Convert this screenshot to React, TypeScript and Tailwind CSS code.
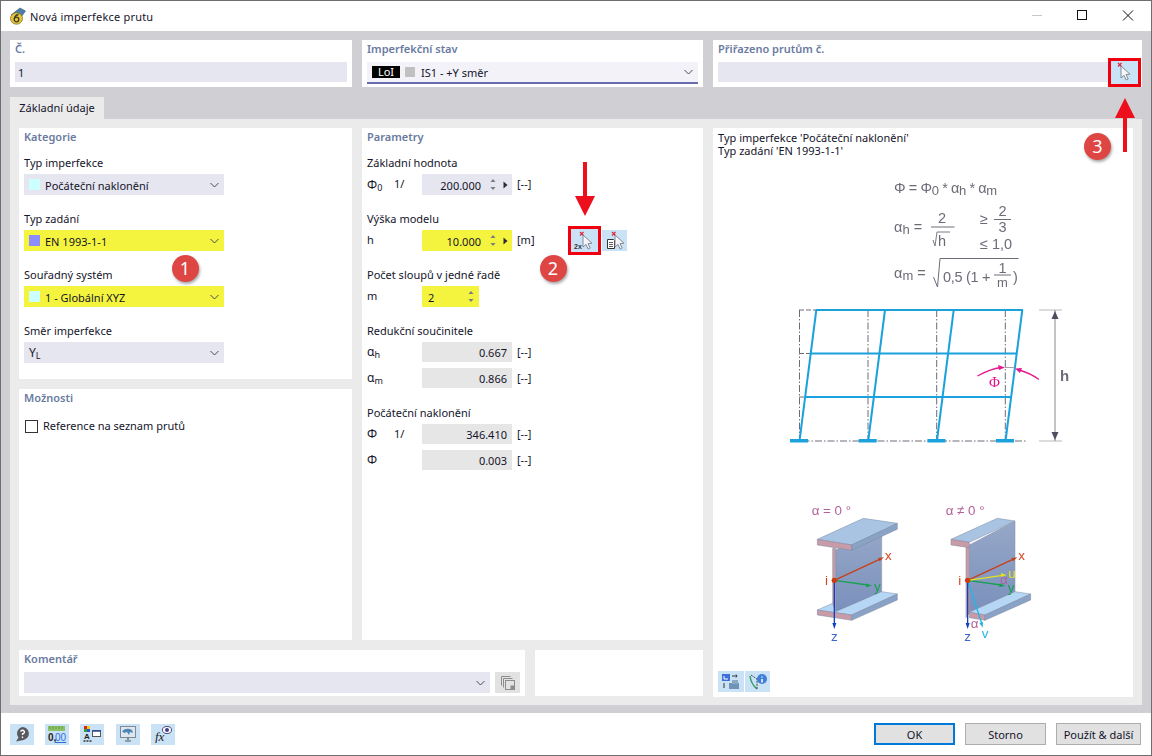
import React from "react";

const Chevron = () => (
  <svg width="9" height="6" viewBox="0 0 9 6" className="shrink-0">
    <path d="M.5 1l4 4 4-4" fill="none" stroke="#4a4a58" strokeWidth="1" />
  </svg>
);

const Combo = ({ color, text, yellow }: { color?: string; text: React.ReactNode; yellow?: boolean }) => (
  <div className={`flex items-center w-[200px] h-[21px] pl-[5px] pr-[5px] ${yellow ? "bg-[#f4f43e]" : "bg-[#e6e6f0]"}`}>
    {color && <span className="w-[11px] h-[11px] mr-[5px] shrink-0" style={{ background: color }} />}
    <span className="flex-1 leading-none pt-[1px]">{text}</span>
    <Chevron />
  </div>
);

const Group = ({ label, children }: { label: string; children: React.ReactNode }) => (
  <div className="mb-[13px]">
    <div className="h-[22px] flex items-center pt-[1px]">{label}</div>
    {children}
  </div>
);

const PanelTitle = ({ children }: { children: React.ReactNode }) => (
  <div className="h-[18px] flex items-center font-semibold text-[#6a7aa0]">{children}</div>
);

const Spin = () => (
  <svg width="8" height="15" viewBox="0 0 8 15" className="shrink-0">
    <path d="M4 2l2.5 3h-5z" fill="#7a7a80" />
    <path d="M1.5 10h5L4 13z" fill="#7a7a80" />
  </svg>
);
const RightTri = () => (
  <svg width="5" height="8" viewBox="0 0 5 8" className="shrink-0">
    <path d="M0.5 0.5L4.5 4 0.5 7.5z" fill="#2a2a35" />
  </svg>
);

const Sym = ({ a, b }: { a: string; b?: string }) => (
  <span className="whitespace-nowrap text-[12px]">
    {a}
    {b && <span className="text-[9px] relative top-[2px]">{b}</span>}
  </span>
);

const SpinInput = ({ value, yellow }: { value: string; yellow?: boolean }) => (
  <div className={`w-[90px] h-[21px] flex items-center ${yellow ? "bg-[#f4f43e]" : "bg-[#e6e6f0]"}`}>
    <span className="w-[59px] text-right leading-none pt-[1px]">{value}</span>
    <span className="ml-[8px]"><Spin /></span>
    <span className="ml-[6px]"><RightTri /></span>
  </div>
);

const ReadRow = ({ sym, mid, value }: { sym: React.ReactNode; mid?: string; value: string }) => (
  <div className="flex items-center h-[20px] mb-[6px]">
    <span className="w-[27px]">{sym}</span>
    <span className="w-[28px]">{mid}</span>
    <div className="w-[90px] h-[20px] bg-[#e6e6e6] text-right pr-[5px] leading-[21px]">{value}</div>
    <span className="ml-[5px]">[--]</span>
  </div>
);

const Cursor = ({ x = 0, y = 0 }: { x?: number; y?: number }) => (
  <g transform={`translate(${x} ${y})`}>
    <path d="M0 0l3.5 3.5M3.5 0L0 3.5" stroke="#e02030" strokeWidth="1.1" />
    <path d="M3 3l0 12 3-2.6 2.2 4.6 2-1-2.2-4.4 4-.4z" fill="#f4f6fa" stroke="#7c7f88" strokeWidth="0.9" />
  </g>
);

const IconBtn = ({ children, w = 24 }: { children: React.ReactNode; w?: number }) => (
  <div className="h-[21px] bg-[#cae2f6] flex items-center justify-center shrink-0" style={{ width: w }}>
    {children}
  </div>
);

const Formula = () => (
  <g fontFamily="'Liberation Sans', sans-serif" fontSize="14.5" fill="#6c6c78" className="blur-[0.3px]">
    <text x="894" y="193" letterSpacing="-0.4">Φ = Φ<tspan fontSize="13" dy="2">0</tspan><tspan dy="-2"> * α</tspan><tspan fontSize="13" dy="2">h</tspan><tspan dy="-2"> * α</tspan><tspan fontSize="13" dy="2">m</tspan></text>
    <text x="894" y="232">α<tspan fontSize="13" dy="2">h</tspan><tspan dy="-2"> =</tspan></text>
    <text x="942" y="223" textAnchor="middle">2</text>
    <path d="M931 227h23.5" stroke="#6c6c78" strokeWidth="1" />
    <path d="M933 240l2 6 2-14h13" fill="none" stroke="#6c6c78" strokeWidth="0.9" />
    <text x="938" y="245.5">h</text>
    <text x="980" y="224">≥</text>
    <text x="1002.5" y="216" textAnchor="middle">2</text>
    <path d="M994 219.500h17" stroke="#6c6c78" strokeWidth="1" />
    <text x="1002.5" y="232" textAnchor="middle">3</text>
    <text x="980" y="249">≤ 1,0</text>
    <text x="894" y="278">α<tspan fontSize="13" dy="2">m</tspan><tspan dy="-2"> =</tspan></text>
    <path d="M933.5 277l4 10 2.500-28.500h78.500" fill="none" stroke="#6c6c78" strokeWidth="1" />
    <text x="943" y="282" letterSpacing="-0.3">0,5 (1 +</text>
    <text x="1002.5" y="272.5" textAnchor="middle">1</text>
    <path d="M994 275h17" stroke="#6c6c78" strokeWidth="1" />
    <text x="1002.5" y="287" textAnchor="middle" fontSize="13">m</text>
    <text x="1013" y="282">)</text>
  </g>
);

const Frame = () => {
  const blue = "#1ba1dc";
  const dd = "7 2 1.5 2";
  return (
    <g className="blur-[0.2px]">
      {[799.5, 868, 936.7, 1005.3].map((x) => (
        <path key={x} d={`M${x} 310V440`} stroke="#6c6c78" strokeWidth="1" strokeDasharray={dd} />
      ))}
      <path d="M790 441H1027" stroke="#6c6c78" strokeWidth="1" strokeDasharray={dd} />
      <path d="M799 310h17M799 353.5h11M799 397h6" stroke="#6c6c78" strokeWidth="1" strokeDasharray="5 2" />
      <path d="M816 310H1023" stroke={blue} strokeWidth="2.2" />
      <path d="M810.7 353.5H1016.7M805 397H1011" stroke={blue} strokeWidth="1.9" />
      {[0, 68.7, 137.4, 206].map((d) => (
        <g key={d}>
          <path d={`M${799.5 + d} 441L${816.3 + d} 310`} stroke={blue} strokeWidth="2" />
          <rect x={790 + d} y="439" width="18" height="3.5" fill={blue} />
        </g>
      ))}
      <path d="M1039 310h23M1039 441h23" stroke="#b8b8be" strokeWidth="1" />
      <path d="M1055 310V441" stroke="#8a8a92" strokeWidth="1" />
      <path d="M1055 311l-3.500 8h7zM1055 440l-3.500-8h7z" fill="#4e4e60" />
      <text x="1060" y="381" fontFamily="'Liberation Sans', sans-serif" fontSize="15" fontWeight="bold" fill="#6c6c78">h</text>
      <path d="M1005 367.5h10" stroke="#8a8a92" strokeWidth="0.8" />
      <path d="M977.5 376Q990 369 1001 367.5M1039 379.5Q1030 373 1019 370" fill="none" stroke="#e5178f" strokeWidth="1.3" />
      <path d="M1005 367.5l-7-2.500 1 5zM1015 368.5l7-.5-2 5z" fill="#e5178f" />
      <text x="994.500" y="387" textAnchor="middle" fontFamily="'Liberation Serif', serif" fontSize="15" fill="#e5178f">Φ</text>
    </g>
  );
};

const axisFont = { fontFamily: "'Liberation Sans', sans-serif", fontSize: 40 };

const Beams = () => (
  <g transform="translate(780 495) scale(0.3333)" className="blur-[0.2px]">
    <defs>
      <linearGradient id="web" x1="0" y1="0" x2="0" y2="1">
        <stop offset="0" stopColor="#96a8c8" />
        <stop offset="1" stopColor="#7a90bc" />
      </linearGradient>
    </defs>
    <text x="95" y="61" {...axisFont} fill="#b4609a">α = 0 °</text>
    <text x="497" y="61" {...axisFont} fill="#b4609a">α ≠ 0 °</text>
    {/* left */}
    <g stroke="#7c8aa0" strokeWidth="1.5">
      <path d="M167 165L305 105V290L167 350z" fill="url(#web)" />
      <path d="M158 160h9V350l-9-6z" fill="#c99aa8" />
      <path d="M112 133L250 70l102 15L215 150z" fill="#a8c4e2" />
      <path d="M112 133l103 17v16L112 150z" fill="#c99aa8" />
      <path d="M215 150L352 85v18L215 166z" fill="#8aa2c6" />
      <path d="M112 345l46-20 9 25 138-60 47 7L215 360z" fill="#b6d6f6" />
      <path d="M112 345l103 15v16l-103-16z" fill="#c99aa8" />
      <path d="M215 360l137-63v18L215 376z" fill="#8aa2c6" />
    </g>
    <path d="M163 256L305 190" stroke="#c8401a" strokeWidth="4" />
    <path d="M312 187l-18 2 5 10z" fill="#c8401a" />
    <path d="M163 256l100 14" stroke="#18a050" strokeWidth="4" />
    <path d="M276 272l-17-7-1 12z" fill="#18a050" />
    <path d="M163 256V388" stroke="#1040c0" strokeWidth="4" />
    <path d="M163 402l-6-18h12z" fill="#1040c0" />
    <circle cx="163" cy="256" r="8" fill="#d03a10" />
    <text x="135" y="270" {...axisFont} fill="#d8441a">i</text>
    <text x="315" y="195" {...axisFont} fill="#d8441a">x</text>
    <text x="282" y="288" {...axisFont} fill="#18a050">y</text>
    <text x="153" y="437" {...axisFont} fill="#3c64cc">z</text>
    {/* right */}
    <g stroke="#7c8aa0" strokeWidth="1.5">
      <path d="M568 150L705 78V290L568 352z" fill="url(#web)" />
      <path d="M558 152h10V354l-10 14z" fill="#c99aa8" />
      <path d="M513 133L652 70l53 8L568 142z" fill="#a8c4e2" />
      <path d="M513 133l55 9v16l-55-8z" fill="#c99aa8" />
      <path d="M568 352L705 290l47 7L615 360z" fill="#b6d6f6" />
      <path d="M568 352l47 8v16l-47-8z" fill="#c99aa8" />
      <path d="M615 360l137-63v18L615 376z" fill="#8aa2c6" />
    </g>
    <path d="M563 256L705 190" stroke="#c8401a" strokeWidth="4" />
    <path d="M712 187l-18 2 5 10z" fill="#c8401a" />
    <path d="M563 256l100 14" stroke="#18a050" strokeWidth="4" />
    <path d="M676 272l-17-7-1 12z" fill="#18a050" />
    <path d="M563 256l105-15" stroke="#e2e21e" strokeWidth="4" />
    <path d="M680 240l-17-6 1 12z" fill="#e2e21e" />
    <path d="M563 256l43 132" stroke="#22b8e0" strokeWidth="4" />
    <path d="M608 398l-10-14 11-4z" fill="#22b8e0" />
    <path d="M563 256V388" stroke="#1040c0" strokeWidth="4" />
    <path d="M563 402l-6-18h12z" fill="#1040c0" />
    <circle cx="563" cy="256" r="8" fill="#d03a10" />
    <text x="535" y="270" {...axisFont} fill="#d8441a">i</text>
    <text x="715" y="195" {...axisFont} fill="#d8441a">x</text>
    <text x="685" y="248" {...axisFont} fill="#e2e21e">u</text>
    <text x="683" y="290" {...axisFont} fill="#18a050">y</text>
    <text x="660" y="267" {...axisFont} fill="#b4609a">α</text>
    <text x="572" y="398" {...axisFont} fill="#b4609a">α</text>
    <text x="553" y="437" {...axisFont} fill="#3c64cc">z</text>
    <text x="605" y="428" {...axisFont} fill="#22b8e0">v</text>
  </g>
);

const Badge = ({ n, cls }: { n: string; cls: string }) => (
  <div className={`absolute w-[27px] h-[27px] rounded-full bg-[#de4644] text-white flex items-center justify-center text-[18px] shadow-[1px_2px_3px_rgba(0,0,0,0.35)] ${cls}`}>
    {n}
  </div>
);

const Arrow = ({ cls, up }: { cls: string; up?: boolean }) => (
  <svg width="22" height="56" viewBox="0 0 22 56" className={`absolute ${cls}`}>
    {up ? <path d="M9 54V20H1L11 0l10 20h-8v34z" fill="#ee0f1c" /> : <path d="M9 0v34H1l10 20 10-20h-8V0z" fill="#ee0f1c" />}
  </svg>
);

export default function App() {
  return (
    <div
      className="relative w-[1152px] h-[756px] border border-[#6e6e6e] bg-white flex flex-col overflow-hidden text-[11px] text-[#14142a]"
      style={{ fontFamily: "'Noto Sans', sans-serif" }}
    >
      {/* Title bar */}
      <div className="h-[30px] flex items-center shrink-0 pl-[8px]">
        <svg width="17" height="18" viewBox="0 0 17 18" className="mr-[4px]">
          <path d="M2 8L11 1l5.500 3-4 5.500z" fill="#4f7fa8" stroke="#33556f" strokeWidth="0.6" />
          <ellipse cx="7.5" cy="11.5" rx="6" ry="5.7" fill="#e8c53a" stroke="#8a7420" strokeWidth="0.8" />
          <circle cx="7.5" cy="12.5" r="2.3" fill="none" stroke="#3a3a30" strokeWidth="1.3" />
          <path d="M9.500 7.500Q6 8 5.300 12" fill="none" stroke="#3a3a30" strokeWidth="1.3" />
        </svg>
        <span className="leading-none tracking-[0.2px]">Nová imperfekce prutu</span>
        <div className="ml-auto flex items-center">
          <svg width="132" height="30" viewBox="0 0 132 30">
            <path d="M13 14.500h10" stroke="#c8c8c8" strokeWidth="1" />
            <rect x="58.500" y="9.500" width="9" height="9" fill="none" stroke="#111" strokeWidth="1" />
            <path d="M104 9.500l10 10M114 9.500l-10 10" stroke="#111" strokeWidth="1" />
          </svg>
        </div>
      </div>

      {/* Body */}
      <div className="h-[682px] bg-[#d0cfd4] pl-[9px] pt-[9px] shrink-0">
        {/* Top row */}
        <div className="flex gap-[10px] h-[47px]">
          <div className="w-[342px] bg-white px-[5px]">
            <div className="h-[22px] flex items-center pb-[4px] font-semibold text-[#6a7aa0]">Č.</div>
            <div className="h-[20px] bg-[#e6e6f0] pl-[3px] leading-[21px]">1</div>
          </div>
          <div className="w-[341px] bg-white px-[5px]">
            <div className="h-[22px] flex items-center pb-[4px] font-semibold text-[#6a7aa0]">Imperfekční stav</div>
            <div className="h-[22px] bg-[#f2f2f8] border-b-2 border-[#6a6aae] flex items-center pl-[5px] pr-[5px]">
              <span className="w-[28px] h-[12px] bg-black text-white text-center leading-[12px]">LoI</span>
              <span className="w-[10px] h-[10px] bg-[#c0c0c0] ml-[5px] mr-[6px]" />
              <span className="flex-1 pt-[2px]">IS1 - +Y směr</span>
              <Chevron />
            </div>
          </div>
          <div className="w-[429px] bg-white pl-[5px] pr-[4px]">
            <div className="h-[22px] flex items-center pb-[4px] font-semibold text-[#6a7aa0]">Přiřazeno prutům č.</div>
            <div className="flex items-center h-[20px]">
              <div className="flex-1 h-[20px] bg-[#e6e6f0]" />
              <div className="relative w-[27px] h-[23px] bg-[#cae2f6] flex items-center justify-center">
                <svg width="18" height="20" viewBox="0 0 18 20"><Cursor x={2} y={1} /></svg>
                <div className="absolute -inset-[3px] border-[3px] border-[#f0000f]" />
              </div>
            </div>
          </div>
        </div>

        {/* Tab */}
        <div className="mt-[10px] w-[94px] h-[22px] bg-[#ebebeb] flex items-center justify-center">Základní údaje</div>

        {/* Tab panel */}
        <div className="w-[1132px] h-[586px] bg-[#ebebeb] p-[9px] flex gap-[10px]">
          <div className="w-[684px] flex flex-col gap-[10px]">
            <div className="flex gap-[10px] h-[512px]">
              <div className="w-[333px] flex flex-col gap-[10px]">
                <div className="h-[251px] bg-white px-[5px] pt-0">
                  <PanelTitle>Kategorie</PanelTitle>
                  <div className="mt-[6px]">
                    <Group label="Typ imperfekce"><Combo color="#ccffff" text="Počáteční naklonění" /></Group>
                    <Group label="Typ zadání"><Combo yellow color="#8c8cff" text="EN 1993-1-1" /></Group>
                    <Group label="Souřadný systém"><Combo yellow color="#ccffff" text="1 - Globální XYZ" /></Group>
                    <Group label="Směr imperfekce"><Combo text={<Sym a="Y" b="L" />} /></Group>
                  </div>
                </div>
                <div className="h-[251px] bg-white px-[5px]">
                  <PanelTitle>Možnosti</PanelTitle>
                  <div className="mt-[13px] flex items-center h-[13px]">
                    <span className="w-[13px] h-[13px] border border-[#333] ml-[1px] mr-[5px] bg-white" />
                    Reference na seznam prutů
                  </div>
                </div>
              </div>
              <div className="w-[341px] bg-white px-[5px]">
                <PanelTitle>Parametry</PanelTitle>
                <div className="mt-[6px]">
                  <Group label="Základní hodnota">
                    <div className="flex items-center h-[21px]">
                      <span className="w-[27px]"><Sym a="Φ" b="0" /></span>
                      <span className="w-[28px]">1/</span>
                      <SpinInput value="200.000" />
                      <span className="ml-[5px]">[--]</span>
                    </div>
                  </Group>
                  <Group label="Výška modelu">
                    <div className="flex items-center h-[21px]">
                      <span className="w-[55px]">h</span>
                      <SpinInput yellow value="10.000" />
                      <span className="ml-[5px] w-[49px]">[m]</span>
                      <div className="relative w-[27px] h-[23px] ml-[5px] bg-[#cae2f6] flex items-center justify-center">
                        <svg width="22" height="20" viewBox="0 0 22 20">
                          <Cursor x={6} y={1} />
                          <text x="0" y="18" fontSize="7" fontWeight="bold" fontFamily="'Liberation Sans', sans-serif" fill="#333">2x</text>
                        </svg>
                        <div className="absolute -inset-[3px] border-[3px] border-[#f0000f]" />
                      </div>
                      <div className="ml-[4px]">
                        <IconBtn w={25}>
                          <svg width="22" height="20" viewBox="0 0 22 20">
                            <path d="M3.500 8.500h6l1 1v8h-7z" fill="#fff" stroke="#333" strokeWidth="1" />
                            <path d="M5 11.500h4M5 13.500h4M5 15.500h4" stroke="#333" strokeWidth="0.8" />
                            <Cursor x={8} y={1} />
                          </svg>
                        </IconBtn>
                      </div>
                    </div>
                  </Group>
                  <Group label="Počet sloupů v jedné řadě">
                    <div className="flex items-center h-[21px]">
                      <span className="w-[55px]">m</span>
                      <div className="w-[57px] h-[21px] bg-[#f4f43e] flex items-center pl-[6px] pr-[4px] justify-between">
                        <span className="leading-none pt-[1px]">2</span>
                        <Spin />
                      </div>
                    </div>
                  </Group>
                  <div>
                    <div className="h-[22px] flex items-center pt-[1px]">Redukční součinitele</div>
                    <ReadRow sym={<Sym a="α" b="h" />} value="0.667" />
                    <ReadRow sym={<Sym a="α" b="m" />} value="0.866" />
                  </div>
                  <div className="mt-[14px]">
                    <div className="h-[22px] flex items-center pt-[1px]">Počáteční naklonění</div>
                    <ReadRow sym={<Sym a="Φ" />} mid="1/" value="346.410" />
                    <ReadRow sym={<Sym a="Φ" />} value="0.003" />
                  </div>
                </div>
              </div>
            </div>
            <div className="flex gap-[10px] h-[47px]">
              <div className="w-[506px] bg-white px-[5px]">
                <div className="h-[22px] flex items-center pb-[4px] font-semibold text-[#6a7aa0]">Komentář</div>
                <div className="flex gap-[5px]">
                  <div className="w-[466px] h-[21px] bg-[#e6e6f0] flex items-center justify-end pr-[5px]"><Chevron /></div>
                  <div className="w-[25px] h-[21px] bg-[#e2e2e2] flex items-center justify-center">
                    <svg width="16" height="16" viewBox="0 0 16 16" fill="none" stroke="#8c8c8c" strokeWidth="1">
                      <path d="M1.500 10.500v-9h9M3.500 12.500v-9h9" />
                      <rect x="5.500" y="5.500" width="9" height="9" />
                      <rect x="11" y="11" width="2.500" height="2.500" fill="#8c8c8c" />
                    </svg>
                  </div>
                </div>
              </div>
              <div className="w-[168px] bg-white" />
            </div>
          </div>

          {/* Right panel */}
          <div className="w-[420px] h-[569px] bg-white flex flex-col">
            <div className="px-[5px] pt-[3px] leading-[13px] h-[32px]">
              <div>Typ imperfekce 'Počáteční naklonění'</div>
              <div>Typ zadání 'EN 1993-1-1'</div>
            </div>
            <svg width="420" height="497" viewBox="713 160 420 497" className="block">
              <Formula />
              <Frame />
              <Beams />
            </svg>
            <div className="flex gap-[1px] pl-[5px] mt-[14px]">
              <IconBtn w={26}>
                <svg width="20" height="18" viewBox="0 0 20 18">
                  <rect x="1" y="1" width="8" height="7" fill="#3f6fd8" />
                  <path d="M3 3v3h4" stroke="#fff" fill="none" />
                  <path d="M11 3h5l-1-1.500M16 3l-1 1.500M3 10v5" stroke="#333" fill="none" />
                  <rect x="8" y="10" width="10" height="6" fill="#6f93b8" />
                  <rect x="11" y="7" width="6" height="4" fill="#8aa8c4" />
                </svg>
              </IconBtn>
              <IconBtn w={25}>
                <svg width="20" height="18" viewBox="0 0 20 18">
                  <path d="M2 3q1 8 7 13" fill="none" stroke="#2a9a5a" strokeWidth="1.400" />
                  <path d="M3 2l6 4v10" fill="none" stroke="#333" strokeWidth="0.9" strokeDasharray="2 1" />
                  <circle cx="14" cy="6" r="5" fill="#3f7fd8" />
                  <path d="M14 3.500v1M14 6v3.500" stroke="#fff" strokeWidth="1.500" />
                </svg>
              </IconBtn>
            </div>
          </div>
        </div>
      </div>

      {/* Footer */}
      <div className="flex-1 flex items-center pl-[9px] pr-[10px]">
        <div className="flex gap-[11px]">
          <IconBtn>
            <svg width="18" height="18" viewBox="0 0 18 18">
              <path d="M9.500 2a6.500 6.500 0 0 1 1 12.900L3 16.500l2.500-4A6.500 6.500 0 0 1 9.500 2z" fill="#5a5a5e" />
              <path d="M7.500 6.500q2-2 3.500-.5t-1.500 3v1M9.500 11.500v1.500" fill="none" stroke="#fff" strokeWidth="1.400" />
            </svg>
          </IconBtn>
          <IconBtn>
            <svg width="20" height="18" viewBox="0 0 20 18">
              <rect x="1" y="1" width="17" height="5" fill="#8cc266" />
              <path d="M3 1v3M6 1v3M9 1v3M12 1v3M15 1v3" stroke="#5a8a3e" strokeWidth="0.7" />
              <text x="1" y="16" fontSize="10" fontWeight="bold" fontFamily="'Liberation Sans', sans-serif" fill="#222">0,</text>
              <text x="8" y="16" fontSize="10" fontFamily="'Liberation Sans', sans-serif" fill="#2f6fe0" textDecoration="underline">00</text>
            </svg>
          </IconBtn>
          <IconBtn>
            <svg width="20" height="18" viewBox="0 0 20 18">
              <rect x="2" y="1" width="3" height="3" fill="#e02020" />
              <rect x="5" y="1" width="3" height="3" fill="#e8d020" />
              <rect x="2" y="4" width="3" height="3" fill="#30a030" />
              <rect x="5" y="4" width="3" height="3" fill="#3050d0" />
              <text x="2" y="14" fontSize="8" fontWeight="bold" fontFamily="'Liberation Sans', sans-serif" fill="#222">A</text>
              <path d="M1.500 16h8" stroke="#333" strokeWidth="1.500" strokeDasharray="2 1" />
              <rect x="10.500" y="5.500" width="8" height="6" fill="#fff" stroke="#555" />
              <path d="M10.500 6h8" stroke="#2a4a9a" strokeWidth="1.500" />
            </svg>
          </IconBtn>
          <div className="ml-[1px]">
            <IconBtn>
              <svg width="18" height="18" viewBox="0 0 18 18">
                <rect x="1.500" y="1.500" width="15" height="11" fill="#dfe6ee" stroke="#7f8a96" />
                <path d="M3 6q5-4 10-1l1 3-3-1-1 3-2-3-3 1z" fill="#4a86b8" />
                <path d="M9 12.500v2.500M6 16h6" stroke="#555" strokeWidth="1.200" />
              </svg>
            </IconBtn>
          </div>
          <IconBtn>
            <svg width="20" height="18" viewBox="0 0 20 18">
              <text x="2" y="16" fontSize="13" fontStyle="italic" fontFamily="'Liberation Serif', serif" fill="#222">fx</text>
              <ellipse cx="14" cy="5" rx="4.500" ry="3.500" fill="#fff" stroke="#4a4a70" />
              <circle cx="14" cy="5" r="2" fill="#3a3a90" />
            </svg>
          </IconBtn>
        </div>
        <div className="ml-auto flex gap-[10px] items-center">
          <button className="w-[81px] h-[22px] bg-[#e1e1e1] border-2 border-[#0078d7] text-[#14142a] leading-none">OK</button>
          <button className="w-[81px] h-[22px] bg-[#e1e1e1] border border-[#adadad] leading-none">Storno</button>
          <button className="w-[85px] h-[22px] bg-[#e1e1e1] border border-[#adadad] leading-none">Použít &amp; další</button>
        </div>
      </div>

      {/* Annotations */}
      <Badge n="1" cls="left-[170.5px] top-[253.5px]" />
      <Badge n="2" cls="left-[538.5px] top-[253.5px]" />
      <Badge n="3" cls="left-[1083px] top-[132px]" />
      <Arrow cls="left-[573px] top-[161px]" />
      <Arrow up cls="left-[1113px] top-[97px]" />
    </div>
  );
}
